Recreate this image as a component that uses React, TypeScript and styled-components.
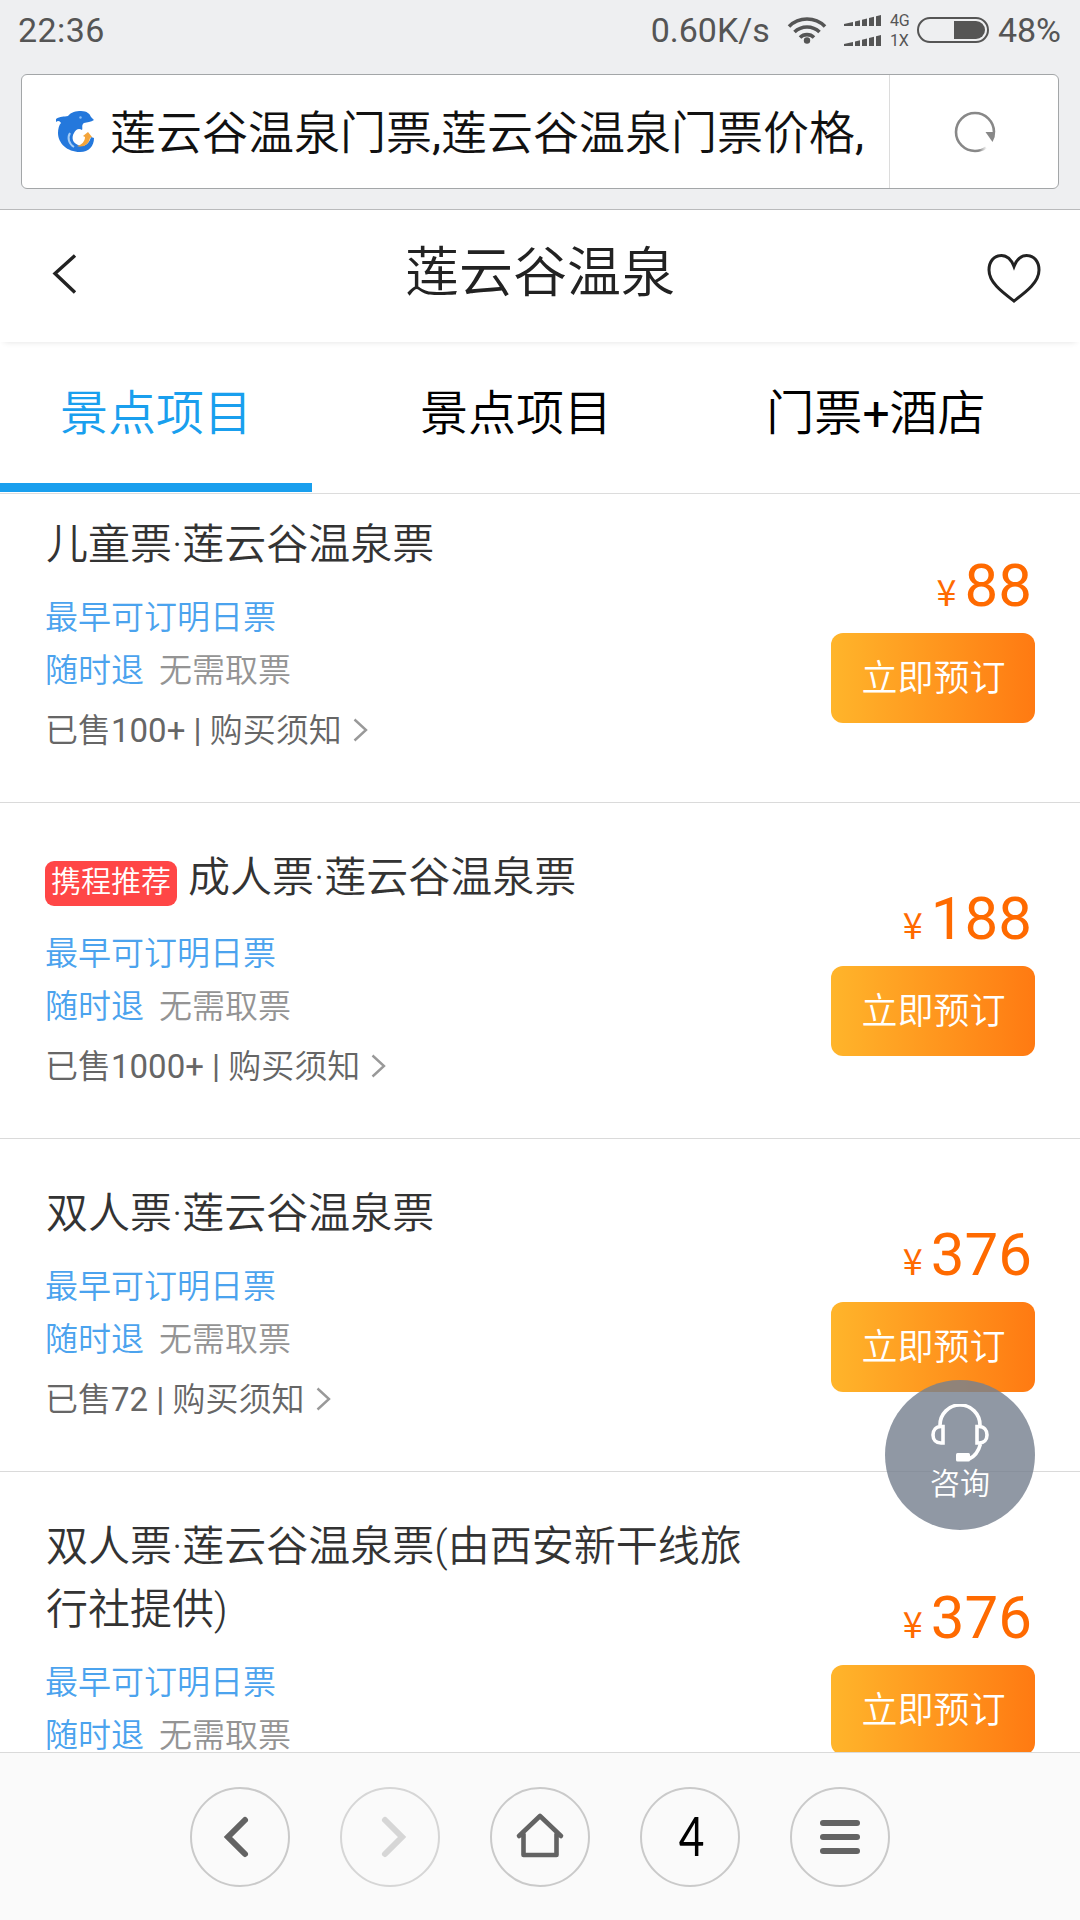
import React from "react";
import styled, { createGlobalStyle } from "styled-components";

const GlobalStyle = createGlobalStyle`
  * { box-sizing: border-box; }
  body {
    margin: 0;
    background: #fff;
    font-family: Roboto, "Noto Sans CJK SC", sans-serif;
    font-weight: 350;
  }
  button {
    font: inherit;
    border: 0;
    padding: 0;
    background: none;
  }
`;

const Screen = styled.div`
  position: relative;
  display: flex;
  flex-direction: column;
  width: 1080px;
  height: 1920px;
  overflow: hidden;
  background: #fff;
`;

const BrowserChrome = styled.header`
  flex: none;
  height: 210px;
  background: #eeeff1;
  border-bottom: 1px solid #b9babc;
`;

const StatusBar = styled.div`
  display: flex;
  align-items: center;
  height: 60px;
  padding: 0 19px 0 18px;
  color: #555;
  font-size: 34px;
  font-weight: 400;
  line-height: 60px;
`;

const StatusText = styled.span<{ $spacing?: string }>`
  white-space: nowrap;
  letter-spacing: ${(p) => p.$spacing ?? "0"};
`;

const StatusRight = styled.div`
  display: flex;
  align-items: center;
  margin-left: auto;
`;

const WifiIcon = styled.svg`
  display: block;
  margin-left: 17px;
`;

const SignalIcon = styled.svg`
  display: block;
  margin-left: 17px;
`;

const NetworkTypes = styled.div`
  display: flex;
  flex-direction: column;
  width: 27px;
  margin: 1px 0 0 9px;
  font-size: 16px;
  line-height: 20px;
`;

const BatteryShell = styled.div`
  display: flex;
  justify-content: flex-end;
  width: 72px;
  height: 26px;
  padding: 2px;
  margin-right: 9px;
  border: 2px solid #555;
  border-radius: 13px;
`;

const BatteryLevel = styled.div`
  width: 31px;
  height: 18px;
  background: #555;
  border-radius: 0 9px 9px 0;
`;

const AddressBar = styled.div`
  display: flex;
  width: 1038px;
  height: 115px;
  margin: 14px 0 0 21px;
  background: #fff;
  border: 1px solid #a3a6a8;
  border-radius: 6px;
`;

const AddressTitle = styled.div`
  display: flex;
  align-items: center;
  flex: 1;
  padding: 3px 0 0 34px;
  color: #111;
  font-size: 46px;
  line-height: 110px;
  white-space: nowrap;
`;

const SiteLogo = styled.svg`
  flex: none;
  margin: 0 15px 4px 0;
`;

const RefreshButton = styled.button`
  display: flex;
  align-items: center;
  justify-content: center;
  width: 169px;
  padding-left: 2px;
  border-left: 1px solid #dcdcdc;
`;

const PageHeader = styled.div`
  display: flex;
  flex: none;
  align-items: center;
  justify-content: space-between;
  height: 132px;
  padding: 0 39px;
  box-shadow: 0 4px 6px -4px rgba(0, 0, 0, 0.12);
`;

const HeaderButton = styled.button<{ $drop?: number; $inset?: number }>`
  display: flex;
  width: 55px;
  padding-top: ${(p) => p.$drop ?? 0}px;
  padding-left: ${(p) => p.$inset ?? 0}px;
  margin-bottom: 2px;
`;

const PageTitle = styled.h1`
  margin: 0 0 4px;
  color: #222;
  font-size: 54px;
  font-weight: 350;
  line-height: 80px;
`;

const Tabs = styled.nav`
  display: flex;
  flex: none;
  gap: 48px;
  height: 152px;
  border-bottom: 1px solid #dcdcdc;
`;

const Tab = styled.button<{ $active?: boolean }>`
  width: 312px;
  height: 150px;
  padding-top: 3px;
  border-bottom: 9px solid ${(p) => (p.$active ? "#199fee" : "transparent")};
  color: ${(p) => (p.$active ? "#199fee" : "#000")};
  font-size: 48px;
  font-weight: 350;
  line-height: 138px;
  white-space: nowrap;
`;

const Latin = styled.span`
  font-weight: 400;
`;

const TicketList = styled.main`
  flex: 1;
  min-height: 0;
  overflow: hidden;
`;

const TicketRow = styled.article<{ $scrolled?: boolean }>`
  display: flex;
  align-items: flex-start;
  justify-content: space-between;
  margin-top: ${(p) => (p.$scrolled ? "-24px" : "0")};
  padding: 43px 45px 45px 46px;
  border-bottom: 1px solid #dadada;
`;

const TicketInfo = styled.div`
  width: 710px;
`;

const TicketTitle = styled.h2<{ $tagged?: boolean }>`
  margin: 0 0 ${(p) => (p.$tagged ? 17.5 : 14.5)}px;
  color: #333;
  font-size: 42px;
  font-weight: 350;
  line-height: 63px;
`;

const Badge = styled.span`
  display: inline-block;
  height: 45px;
  margin: 0 11px 0 -1px;
  padding: 0 6px;
  background: #ff4646;
  border-radius: 9px;
  color: #fff;
  font-size: 30px;
  line-height: 41px;
`;

const InfoLine = styled.div<{ $tone: string; $gap?: number }>`
  display: flex;
  align-items: center;
  height: 53.5px;
  margin: ${(p) => p.$gap ?? 0}px 0 0 -1px;
  color: ${(p) => p.$tone};
  font-size: 33px;
  line-height: 53px;
  white-space: pre;
`;

const Muted = styled.span`
  margin-left: 15px;
  color: #949494;
`;

const Chevron = styled.svg`
  margin-left: 11px;
`;

const Purchase = styled.div<{ $offset: number }>`
  display: flex;
  flex-direction: column;
  align-items: flex-end;
  padding-top: ${(p) => p.$offset}px;
`;

const Price = styled.div`
  display: flex;
  align-items: baseline;
  height: 70px;
  padding-right: 3px;
  color: #ff6a00;
  font-size: 60px;
  font-weight: 400;
  line-height: 71px;
`;

const Currency = styled.span`
  margin-right: 8px;
  font-family: "Noto Sans CJK SC", sans-serif;
  font-size: 36px;
  line-height: 40px;
`;

const BookButton = styled.button`
  width: 204px;
  height: 90px;
  margin-top: 13px;
  padding: 2px 0 0 1px;
  background: linear-gradient(90deg, #ffb52b, #ff7a12);
  border-radius: 12px;
  color: #fff;
  font-size: 36px;
  line-height: 88px;
`;

const ConsultButton = styled.button`
  position: absolute;
  top: 1380px;
  left: 885px;
  display: flex;
  flex-direction: column;
  align-items: center;
  width: 150px;
  height: 150px;
  padding-top: 24px;
  background: rgba(118, 128, 143, 0.81);
  border-radius: 50%;
  color: #fff;
  font-size: 30px;
  line-height: 43px;
`;

const Toolbar = styled.footer`
  display: flex;
  flex: none;
  justify-content: center;
  gap: 50px;
  height: 168px;
  padding-top: 34px;
  background: #fafafa;
  border-top: 1px solid #dadada;
`;

const ToolButton = styled.button<{ $disabled?: boolean }>`
  display: flex;
  align-items: center;
  justify-content: center;
  width: 100px;
  height: 100px;
  border: 2px solid ${(p) => (p.$disabled ? "#d6d6d6" : "#cacaca")};
  border-radius: 50%;
  color: ${(p) => (p.$disabled ? "#d6d6d6" : "#636363")};
`;

const TabCount = styled.span`
  margin: -3px 0 0 4px;
  color: #000;
  font-family: Lato, sans-serif;
  font-size: 54px;
  font-weight: 400;
  line-height: 96px;
  transform: scaleX(0.82);
`;

type Ticket = {
  name: string;
  sold?: string;
  price: string;
  recommended?: boolean;
  offset: number;
};

const tickets: Ticket[] = [
  { name: "儿童票·莲云谷温泉票", sold: "100+", price: "88", offset: 37 },
  { name: "成人票·莲云谷温泉票", sold: "1000+", price: "188", recommended: true, offset: 37 },
  { name: "双人票·莲云谷温泉票", sold: "72", price: "376", offset: 37 },
  { name: "双人票·莲云谷温泉票(由西安新干线旅行社提供)", price: "376", offset: 67 },
];

const signalBars = "M0 9L9 7V11H0ZM11 6.5L16 5.3V11H11ZM18 4.8L23 3.6V11H18ZM25 3L30 1.8V11H25ZM32 1.2L37 0V11H32Z";

function TicketItem({ ticket, first }: { ticket: Ticket; first: boolean }) {
  return (
    <TicketRow $scrolled={first}>
      <TicketInfo>
        <TicketTitle $tagged={ticket.recommended}>
          {ticket.recommended && <Badge>携程推荐</Badge>}
          {ticket.name}
        </TicketTitle>
        <InfoLine $tone="#4ba3ee">最早可订明日票</InfoLine>
        <InfoLine $tone="#4ba3ee">
          随时退<Muted>无需取票</Muted>
        </InfoLine>
        {ticket.sold && (
          <InfoLine $tone="#666" $gap={6}>
            已售<Latin>{`${ticket.sold} | `}</Latin>购买须知
            <Chevron width="15" height="24" viewBox="0 0 15 24" fill="none" stroke="#999" strokeWidth="2.4">
              <path d="M1.5 1.5L13 12L1.5 22.5" />
            </Chevron>
          </InfoLine>
        )}
      </TicketInfo>
      <Purchase $offset={ticket.offset}>
        <Price>
          <Currency>¥</Currency>
          {ticket.price}
        </Price>
        <BookButton>立即预订</BookButton>
      </Purchase>
    </TicketRow>
  );
}

export default function App() {
  return (
    <>
      <GlobalStyle />
      <Screen>
        <BrowserChrome>
          <StatusBar>
            <StatusText $spacing="0.4px">22:36</StatusText>
            <StatusRight>
              <StatusText>0.60K/s</StatusText>
              <WifiIcon width="40" height="28" viewBox="0 0 40 28" fill="none" stroke="#555" strokeWidth="3.6">
                <path d="M2 10.5A25.5 25.5 0 0 1 38 10.5M7.5 16A18 18 0 0 1 32.5 16M13 21.5A10 10 0 0 1 27 21.5" />
                <circle cx="20" cy="24.5" r="3.2" fill="#555" stroke="none" />
              </WifiIcon>
              <SignalIcon width="37" height="31" viewBox="0 0 37 31" fill="#555">
                <path d={signalBars} />
                <path d={signalBars} transform="translate(0 20)" />
              </SignalIcon>
              <NetworkTypes>
                <span>4G</span>
                <span>1X</span>
              </NetworkTypes>
              <BatteryShell>
                <BatteryLevel />
              </BatteryShell>
              <StatusText>48%</StatusText>
            </StatusRight>
          </StatusBar>
          <AddressBar>
            <AddressTitle>
              <SiteLogo width="39" height="41" viewBox="0 0 39 41">
                <path
                  fill="#2478dc"
                  d="M0 8C4 5 8 6 12 5C15 1 20 0 25 0C31 0 34 3 35 6L38 9C35 11 31 11 28 12C25 14 27 17 26 19C23 17 20 18 18 22C15 27 17 32 22 34C28 37 33 33 35 26L38 27C38 35 33 41 24 41C11 41 2 32 2 22C2 18 3 14 5 12C4 10 2 9 0 11Z"
                />
                <path fill="none" stroke="#a5cdf5" strokeWidth="2" d="M14 22C11 27 13 33 18 36" />
                <path fill="#f3a43a" d="M32 21L36 26L34 27C33 33 28 37 21 35C26 34 29 30 29 26L27 25Z" />
                <circle cx="24.5" cy="6.5" r="1.2" fill="#8cc0f5" />
              </SiteLogo>
              莲云谷温泉门票<Latin>,</Latin>莲云谷温泉门票价格<Latin>,</Latin>
            </AddressTitle>
            <RefreshButton aria-label="刷新">
              <svg width="44" height="44" viewBox="0 0 44 44">
                <defs>
                  <linearGradient id="tail" x1="0" x2="1">
                    <stop offset="0.4" stopColor="#888" />
                    <stop offset="1" stopColor="#888" stopOpacity="0.1" />
                  </linearGradient>
                </defs>
                <path d="M41 22A19 19 0 1 0 22 41" fill="none" stroke="#888" strokeWidth="2.6" />
                <path d="M22 41A19 19 0 0 0 33 37.5" fill="none" stroke="url(#tail)" strokeWidth="2.6" />
                <path d="M32.5 22H42.2Q42.5 27 39.5 32Z" fill="#888" />
              </svg>
            </RefreshButton>
          </AddressBar>
        </BrowserChrome>

        <PageHeader>
          <HeaderButton aria-label="返回" $inset={12}>
            <svg width="27" height="42" viewBox="0 0 27 42" fill="none" stroke="#222" strokeWidth="3.4">
              <path d="M24 1.5L4 19.5L24 38.5" />
            </svg>
          </HeaderButton>
          <PageTitle>莲云谷温泉</PageTitle>
          <HeaderButton aria-label="收藏" $drop={5}>
            <svg width="55" height="50" viewBox="0 0 55 50" fill="none" stroke="#222" strokeWidth="3">
              <path d="M28 13.5C25.500 7 21.500 2.500 15.500 2.500C7.500 2.500 3 9 3 17C3 30 17.500 40 28 48C38.500 40 53 30 53 17C53 9 48.500 2.500 40.500 2.500C34.500 2.500 30.500 7 28 13.500Z" />
            </svg>
          </HeaderButton>
        </PageHeader>

        <Tabs>
          <Tab $active>景点项目</Tab>
          <Tab>景点项目</Tab>
          <Tab>
            门票<Latin>+</Latin>酒店
          </Tab>
        </Tabs>

        <TicketList>
          {tickets.map((ticket, i) => (
            <TicketItem key={ticket.name} ticket={ticket} first={i === 0} />
          ))}
        </TicketList>

        <Toolbar>
          <ToolButton aria-label="后退">
            <svg width="44" height="44" viewBox="0 0 44 44" fill="none" stroke="currentColor" strokeWidth="6" strokeLinecap="round">
              <path d="M27 5L10 22L27 39" />
            </svg>
          </ToolButton>
          <ToolButton aria-label="前进" $disabled>
            <svg width="44" height="44" viewBox="0 0 44 44" fill="none" stroke="currentColor" strokeWidth="6" strokeLinecap="round">
              <path d="M17 5L34 22L17 39" />
            </svg>
          </ToolButton>
          <ToolButton aria-label="主页">
            <svg width="50" height="50" viewBox="0 0 50 50" fill="none" stroke="currentColor" strokeWidth="4.6" strokeLinecap="round" strokeLinejoin="round">
              <path d="M4 24L25 4L46 24M8.5 22V43H41.5V22" />
            </svg>
          </ToolButton>
          <ToolButton aria-label="标签页">
            <TabCount>4</TabCount>
          </ToolButton>
          <ToolButton aria-label="菜单">
            <svg width="40" height="34" viewBox="0 0 40 34" fill="currentColor">
              <rect width="40" height="6" rx="3" />
              <rect y="14" width="40" height="6" rx="3" />
              <rect y="28" width="40" height="6" rx="3" />
            </svg>
          </ToolButton>
        </Toolbar>

        <ConsultButton>
          <svg width="58" height="58" viewBox="0 0 58 58" fill="none" stroke="#fff" strokeWidth="3.6">
            <path d="M9 21A20 20 0 0 1 49 21" />
            <path d="M12 22.5V39H10C5 39 2 35.5 2 31C2 26 5 22.5 10 22.5Z" />
            <path d="M46 22.5V39H48C53 39 56 35.5 56 31C56 26 53 22.5 48 22.5Z" />
            <path d="M49.5 40C47 49 43 53 38 55" />
            <rect x="25" y="49" width="14" height="8.5" rx="1.5" fill="#fff" stroke="none" />
          </svg>
          咨询
        </ConsultButton>
      </Screen>
    </>
  );
}
